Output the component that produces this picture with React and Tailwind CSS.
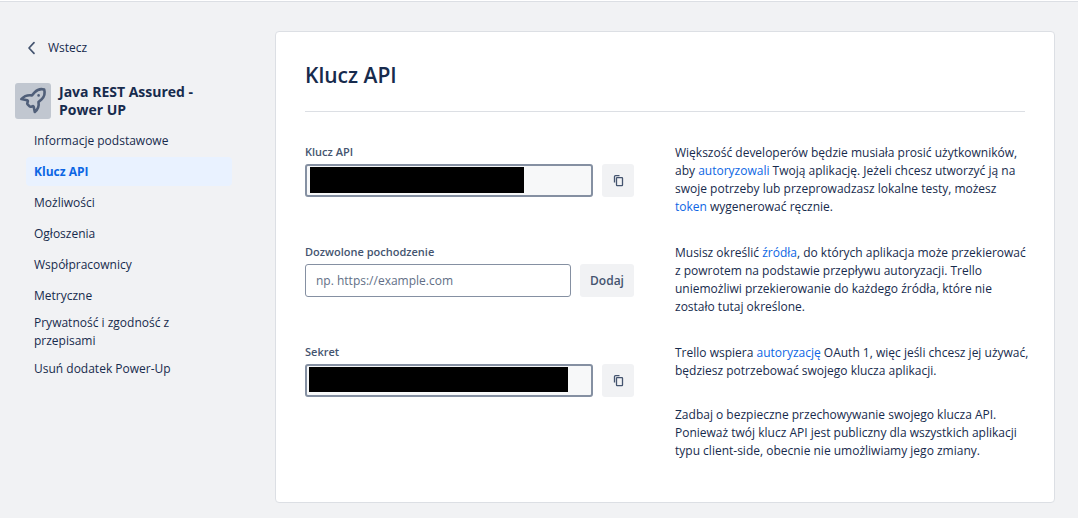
import React from "react";

const NAV_ITEMS = [
  "Informacje podstawowe",
  "Klucz API",
  "Możliwości",
  "Ogłoszenia",
  "Współpracownicy",
  "Metryczne",
  "Prywatność i zgodność z przepisami",
  "Usuń dodatek Power-Up",
];

function RocketIcon() {
  return (
    <svg viewBox="0 0 36 36" className="size-9" fill="none" stroke="#505f79" strokeWidth="2.6" strokeLinejoin="round" strokeLinecap="round" aria-hidden="true">
      <path d="M29.2 6.600C26 5.600 22.300 6.600 19.600 9.400L17 12.400C12.600 11.700 9.200 13 6.300 16.100L12.200 17.300C12.800 17.500 13 18 12.800 18.500L12.300 20C12.100 20.500 12.200 21 12.600 21.400L14.600 23.400C15 23.800 15.500 23.900 16 23.700L17.500 23.200C18 23 18.500 23.300 18.700 23.800L19.800 29C22.800 26.500 24.200 22.900 23.500 19L26.400 16.500C29.300 13.800 30.200 10 29.200 6.600Z" />
      <circle cx="23.600" cy="12.400" r="1.300" fill="#505f79" stroke="none" />
    </svg>
  );
}

function CopyIcon() {
  return (
    <svg viewBox="0 0 16 16" className="size-4" fill="none" stroke="#44546f" strokeWidth="1.3" strokeLinejoin="round" aria-hidden="true">
      <path d="M4.500 9.500V3.600Q4.500 2.600 5.500 2.600H9.500" />
      <rect x="6.500" y="4.600" width="6" height="8" rx="0.600" />
    </svg>
  );
}

function CopyButton({ label }) {
  return (
    <button type="button" aria-label={label} className="flex h-[33px] w-8 shrink-0 items-center justify-center rounded-[3px] bg-[#f1f2f4]">
      <CopyIcon />
    </button>
  );
}

function FieldLabel({ htmlFor, children }) {
  return (
    <label htmlFor={htmlFor} className="mb-1 block text-[11px] leading-4 font-semibold text-[#44546f]">
      {children}
    </label>
  );
}

function SecretField({ id, label, maskClass }) {
  return (
    <div>
      <FieldLabel htmlFor={id}>{label}</FieldLabel>
      <div className="flex gap-[9px]">
        <div className="relative min-w-0 flex-1">
          <input id={id} type="text" readOnly className="block h-[33px] w-full rounded-[3px] border-2 border-[#8590a2] bg-[#f7f8f9] px-2" />
          <div className={"absolute bg-black " + maskClass} />
        </div>
        <CopyButton label={"Kopiuj: " + label} />
      </div>
    </div>
  );
}

function TextLink({ children }) {
  return <a href="#" className="text-[#0c66e4]">{children}</a>;
}

function Sidebar() {
  return (
    <aside className="w-[275px] shrink-0 pt-[35px] pl-[15px]">
      <a href="#" className="ml-3 flex w-fit items-center gap-3 leading-[22px]">
        <svg viewBox="0 0 9 14" className="h-[14px] w-[9px]" fill="none" stroke="#44546f" strokeWidth="1.700" strokeLinecap="round" strokeLinejoin="round" aria-hidden="true">
          <path d="M7 1.700L2 7L7 12.300" />
        </svg>
        Wstecz
      </a>
      <div className="mt-6 flex gap-2">
        <div className="size-9 shrink-0 rounded-[3px] bg-[#c1c7d0]">
          <RocketIcon />
        </div>
        <h2 className="w-[150px] text-[14px] leading-[18px] font-bold">Java REST Assured - Power UP</h2>
      </div>
      <nav className="mt-[7px] mr-[43px] ml-[11px]">
        <ul className="flex flex-col gap-[2px]">
          {NAV_ITEMS.map((item) => {
            const active = item === "Klucz API";
            return (
              <li key={item}>
                <a
                  href="#"
                  aria-current={active ? "page" : undefined}
                  className={
                    "flex min-h-[29px] items-center rounded-[4px] py-[2px] pr-8 pl-2 " +
                    (active ? "bg-[#e9f2ff] font-bold text-[#0c66e4]" : "")
                  }
                >
                  {item}
                </a>
              </li>
            );
          })}
        </ul>
      </nav>
    </aside>
  );
}

export default function App() {
  return (
    <div className="min-h-screen border-t border-white bg-[#f1f2f4] font-['Open_Sans','Noto_Sans',sans-serif] text-[12px] leading-[18px] text-[#172b4d]">
      <div className="flex border-t border-[#dcdfe4]">
        <Sidebar />
        <main className="mt-[29px] mr-[23px] mb-4 min-w-0 flex-1 rounded-[4px] border border-[#dcdfe4] bg-white px-[29px] pt-7 pb-[42px]">
          <h1 className="border-b border-[#dcdfe4] pb-[21px] text-[21px] leading-[30px] font-semibold">Klucz API</h1>
          <div className="mt-8 -mr-2 grid grid-cols-[329fr_358fr] gap-x-[41px] gap-y-7">
            <SecretField id="api-key" label="Klucz API" maskClass="top-[3px] left-[5px] h-[26px] w-[214px]" />
            <p>
              Większość developerów będzie musiała prosić użytkowników, aby <TextLink>autoryzowali</TextLink> Twoją
              aplikację. Jeżeli chcesz utworzyć ją na swoje potrzeby lub przeprowadzasz lokalne testy, możesz
              <br />
              <TextLink>token</TextLink> wygenerować ręcznie.
            </p>
            <div>
              <FieldLabel htmlFor="origin">Dozwolone pochodzenie</FieldLabel>
              <div className="flex gap-[9px]">
                <input id="origin" type="url" placeholder="np. https://example.com" className="block h-[33px] min-w-0 flex-1 rounded-[3px] border border-[#8590a2] bg-white px-[10px] placeholder:text-[#626f86]" />
                <button type="button" className="h-[33px] w-[54px] shrink-0 rounded-[3px] bg-[#f1f2f4] font-semibold text-[#44546f]">
                  Dodaj
                </button>
              </div>
            </div>
            <p>
              Musisz określić <TextLink>źródła</TextLink>, do których aplikacja może przekierować z&nbsp;powrotem na
              podstawie przepływu autoryzacji. Trello uniemożliwi przekierowanie do każdego źródła, które nie zostało
              tutaj określone.
            </p>
            <SecretField id="secret" label="Sekret" maskClass="top-[3px] left-[4px] h-[25px] w-[259px]" />
            <div className="flex flex-col gap-[26px]">
              <p>
                Trello wspiera <TextLink>autoryzację</TextLink> OAuth 1, więc jeśli chcesz jej używać, będziesz
                potrzebować swojego klucza aplikacji.
              </p>
              <p>
                Zadbaj o bezpieczne przechowywanie swojego klucza API. Ponieważ twój klucz API jest publiczny dla
                wszystkich aplikacji typu client-side, obecnie nie umożliwiamy jego zmiany.
              </p>
            </div>
          </div>
        </main>
      </div>
    </div>
  );
}
